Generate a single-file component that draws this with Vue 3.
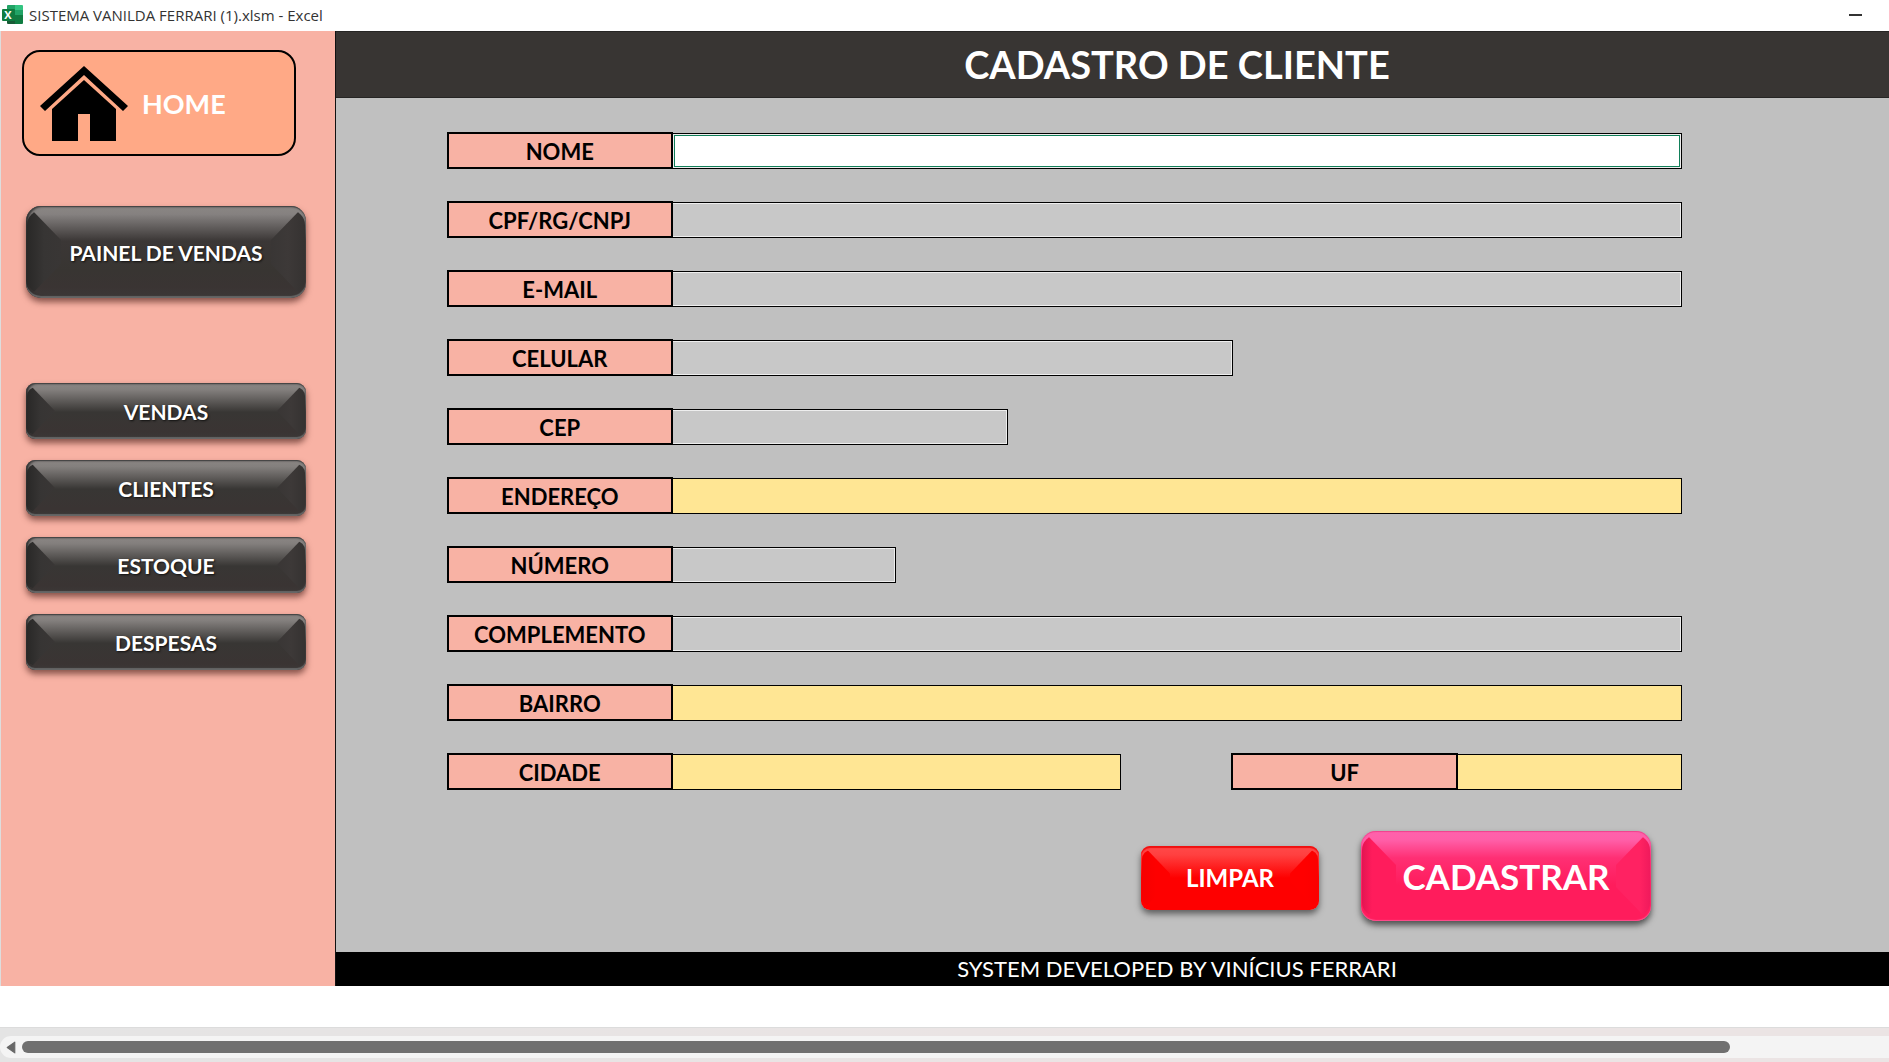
<script setup>
import { reactive, ref } from 'vue'

const menu = ['VENDAS', 'CLIENTES', 'ESTOQUE', 'DESPESAS']

const fields = [
  { id: 'nome', label: 'NOME', size: 'full', focus: true },
  { id: 'documento', label: 'CPF/RG/CNPJ', size: 'full' },
  { id: 'email', label: 'E-MAIL', size: 'full' },
  { id: 'celular', label: 'CELULAR', size: 'large' },
  { id: 'cep', label: 'CEP', size: 'medium' },
  { id: 'endereco', label: 'ENDEREÇO', size: 'full', auto: true },
  { id: 'numero', label: 'NÚMERO', size: 'small' },
  { id: 'complemento', label: 'COMPLEMENTO', size: 'full' },
  { id: 'bairro', label: 'BAIRRO', size: 'full', auto: true },
  { id: 'cidade', label: 'CIDADE', size: 'city', auto: true },
  { id: 'uf', label: 'UF', size: 'small', auto: true, right: true }
]

const client = reactive(Object.fromEntries(fields.map((f) => [f.id, ''])))
const active = ref('nome')

function clearForm() {
  fields.forEach((f) => { client[f.id] = '' })
}
</script>

<template>
  <div class="window">
    <header class="titlebar">
      <svg class="excel" viewBox="0 0 22 20" aria-hidden="true">
        <path d="M6 0h8v5H5V1a1 1 0 0 1 1-1z" fill="#21a366" />
        <path d="M13 0h7a1 1 0 0 1 1 1v4h-8z" fill="#33c481" />
        <path d="M5 5h8v5H5z" fill="#107c41" />
        <path d="M13 5h8v5h-8z" fill="#21a366" />
        <path d="M5 10h8v9H6a1 1 0 0 1-1-1z" fill="#185c37" />
        <path d="M13 10h8v8a1 1 0 0 1-1 1h-7z" fill="#107c41" />
        <rect x="0" y="4" width="13" height="12" rx="1" fill="#107c41" />
        <text x="6" y="14" text-anchor="middle" class="excel-x">X</text>
      </svg>
      <span class="filename">SISTEMA VANILDA FERRARI (1).xlsm - Excel</span>
      <button type="button" class="minimize" aria-label="Minimizar"></button>
    </header>

    <div class="sheet">
      <aside class="sidebar">
        <button type="button" class="home">
          <svg class="house" viewBox="0 0 88 75" aria-hidden="true">
            <path d="M44 0 88 40 83 45 44 9 5 45 0 40z" />
            <path d="M44 14 76 43V75H50V48H38V75H12V43z" />
          </svg>
          <span>HOME</span>
        </button>
        <button type="button" class="bevel dark tall"><span>PAINEL DE VENDAS</span></button>
        <nav class="menu">
          <button v-for="item in menu" :key="item" type="button" class="bevel dark"><span>{{ item }}</span></button>
        </nav>
      </aside>

      <main class="main">
        <h1 class="title">CADASTRO DE CLIENTE</h1>
        <form class="form" @submit.prevent>
          <div class="fields">
            <template v-for="f in fields" :key="f.id">
              <label :for="f.id" :class="{ right: f.right }">{{ f.label }}</label>
              <div class="cell" :class="[f.size, { auto: f.auto, active: active === f.id }]">
                <input :id="f.id" v-model="client[f.id]" type="text" @focus="active = f.id" />
              </div>
            </template>
          </div>
          <div class="actions">
            <button type="button" class="bevel red" @click="clearForm"><span>LIMPAR</span></button>
            <button type="submit" class="bevel pink tall"><span>CADASTRAR</span></button>
          </div>
        </form>
        <footer class="credit">SYSTEM DEVELOPED BY VINÍCIUS FERRARI</footer>
      </main>
    </div>

    <div class="scroll">
      <div class="track">
        <button type="button" class="arrow" aria-label="Rolar para a esquerda">
          <svg viewBox="0 0 9 12" aria-hidden="true"><path d="M8 1v10L1 6z" /></svg>
        </button>
        <div class="rail"><div class="thumb"></div></div>
      </div>
    </div>
  </div>
</template>

<style>
body {
  margin: 0;
}
</style>

<style scoped>
.window,
.window * {
  box-sizing: border-box;
}

.window {
  min-height: 100vh;
  display: flex;
  flex-direction: column;
  background: #fff;
  font-family: Lato, "Open Sans", sans-serif;
  color: #000;
}

button,
input {
  font: inherit;
  margin: 0;
  padding: 0;
  border: 0;
}

.titlebar {
  height: 31px;
  display: flex;
  align-items: center;
  padding: 0 27px 2px 2px;
  font: 15px/20px "Open Sans", "Noto Sans", sans-serif;
  color: #333;
}

.excel {
  width: 22px;
  height: 20px;
  margin-right: 5px;
}

.excel-x {
  font: bold 11px "Open Sans", sans-serif;
  fill: #fff;
}

.minimize {
  width: 13px;
  height: 14px;
  margin-left: auto;
  background: linear-gradient(#333, #333) center / 13px 2px no-repeat;
}

.sheet {
  display: flex;
  border-left: 1px solid #ddd;
}

.sidebar {
  flex: none;
  width: 335px;
  padding: 19px 29px 0 21px;
  background: #f8b2a4;
  border-right: 1px solid #111;
  display: flex;
  flex-direction: column;
  align-items: flex-start;
}

.home {
  width: 274px;
  height: 106px;
  margin-bottom: 50px;
  padding-left: 16px;
  display: flex;
  align-items: center;
  gap: 14px;
  background: #ffa986;
  border: 2px solid #000;
  border-radius: 18px;
  color: #fff;
  font-size: 27px;
  font-weight: 700;
}

.house {
  width: 88px;
  height: 75px;
}

.menu {
  margin-top: 85px;
  display: flex;
  flex-direction: column;
  gap: 21px;
}

.bevel {
  --r: 9px;
  --d: 28px;
  position: relative;
  isolation: isolate;
  overflow: visible;
  height: 56px;
  border-radius: var(--r);
  color: #fff;
  font-size: 21px;
  font-weight: 700;
}

.bevel::before,
.bevel::after {
  content: "";
  position: absolute;
  z-index: -1;
  top: 4px;
  bottom: 4px;
  width: var(--d);
}

.bevel::before {
  left: 1px;
  border-radius: var(--r) 0 0 var(--r);
  background: var(--left);
  clip-path: polygon(0 0, 5px 0, 100% calc(var(--d) - 4px), 100% calc(100% - var(--d) + 4px), 5px 100%, 0 100%);
}

.bevel::after {
  right: 1px;
  border-radius: 0 var(--r) var(--r) 0;
  background: var(--right);
  clip-path: polygon(100% 0, calc(100% - 5px) 0, 0 calc(var(--d) - 4px), 0 calc(100% - var(--d) + 4px), calc(100% - 5px) 100%, 100% 100%);
}

.tall {
  --r: 15px;
  --d: 34px;
  height: 92px;
}

.dark {
  --left: linear-gradient(90deg, #292827, #373534 50%, #393635);
  --right: linear-gradient(270deg, #353231, #3d3938 50%, #393635);
  width: 280px;
  margin-left: 4px;
  background: linear-gradient(#8b8684, #837f7d 12%, #383634 52%, #3a3433 88%, #3c3837);
  box-shadow: inset 0 1px 1px #444, inset 0 -2px 1px #666, inset 2px 0 3px #222, 0 4px 6px rgba(60, 20, 15, 0.6);
  text-shadow: 1px 1px 2px #111;
}

.dark.tall {
  background: linear-gradient(#8b8684, #858180 9%, #3b3736 38%, #383532 70%, #3a3433 88%, #3c3837);
}

.main {
  flex: 1;
  min-width: 0;
  background: #c0c0c0;
}

.title,
.credit {
  padding-left: 129px;
  color: #fff;
  text-align: center;
}

.title {
  margin: 0;
  height: 67px;
  border: solid #262524;
  border-width: 1px 0;
  background: #383533;
  font-size: 38px;
  line-height: 65px;
  font-weight: 700;
}

.form {
  padding: 34px 207px 31px 111px;
}

.fields {
  display: grid;
  grid-template-columns: repeat(11, 1fr);
  row-gap: 32px;
  align-items: end;
}

.fields label {
  position: relative;
  grid-column: 1 / span 2;
  height: 37px;
  margin-right: -1px;
  border: 2px solid #000;
  background: #f8b2a4;
  font-size: 22px;
  line-height: 35px;
  font-weight: 700;
  text-align: center;
}

.fields .right {
  grid-column: 8 / span 2;
  margin-left: -2px;
}

.cell {
  height: 36px;
  border: solid #000;
  border-width: 1px 1px 1px 0;
  background: #c8c8c8;
  box-shadow: inset 0 0 0 2px #eee;
}

.cell input {
  display: block;
  width: 100%;
  height: 100%;
  padding: 0 6px;
  background: none;
  outline: none;
  font-size: 22px;
}

.full {
  grid-column: span 9;
}

.large {
  grid-column: span 5;
}

.medium {
  grid-column: span 3;
}

.small {
  grid-column: span 2;
}

.city {
  grid-column: span 4;
}

.cell:not(.auto):not(.active) {
  box-shadow: inset 0 0 0 1px #eee;
}

.auto {
  background: #ffe694;
  box-shadow: none;
}

.active {
  padding: 1px 1px 1px 2px;
  background: #d8d8d8;
}

.active input {
  background: #fff;
  border: 1px solid #12805a;
}

.actions {
  margin-top: 41px;
  padding-right: 31px;
  display: flex;
  justify-content: flex-end;
  align-items: center;
  gap: 42px;
}

.red {
  --left: linear-gradient(90deg, #f60000, #fe0000 50%);
  --right: linear-gradient(270deg, #fa0000, #ff0000 50%);
  width: 178px;
  height: 64px;
  margin-top: 3px;
  background: linear-gradient(#ff4a4a, #ff4040 14%, #fe0000 50%);
  box-shadow: inset 0 2px 1px #f01010, 0 4px 6px rgba(0, 0, 0, 0.5);
  font-size: 24px;
}

.pink {
  --left: linear-gradient(90deg, #e41552, #ff1c5c 30%);
  --right: linear-gradient(270deg, #f01a5c, #ff2262 30%);
  width: 290px;
  height: 90px;
  background: linear-gradient(#ff62ac, #ff5fa8 10%, #ff2f74 30%, #ff1c5c 60%);
  box-shadow: inset 0 1px 1px #f0428c, inset 0 -1px 1px #ff5090, 0 4px 6px rgba(0, 0, 0, 0.6);
  font-size: 35px;
}

.credit {
  height: 34px;
  background: #000;
  font-size: 22px;
  line-height: 34px;
}

.scroll {
  margin-top: auto;
  padding: 8px 0 4px;
  border-top: 1px solid #dcdcdc;
  background: linear-gradient(90deg, #e4e4e4, #ebe4e4 60%);
}

.track {
  height: 22px;
  display: flex;
  align-items: center;
  background: #f4f4f4;
  border-radius: 11px 0 0 11px;
}

.arrow {
  width: 22px;
  height: 22px;
  padding-left: 6px;
  display: flex;
  align-items: center;
  background: none;
}

.arrow svg {
  width: 10px;
  height: 13px;
  fill: #686868;
  stroke: #686868;
  stroke-linejoin: round;
}

.rail {
  flex: 1;
}

.thumb {
  width: 91.5%;
  height: 12px;
  border-radius: 6px;
  background: #707070;
}
</style>
